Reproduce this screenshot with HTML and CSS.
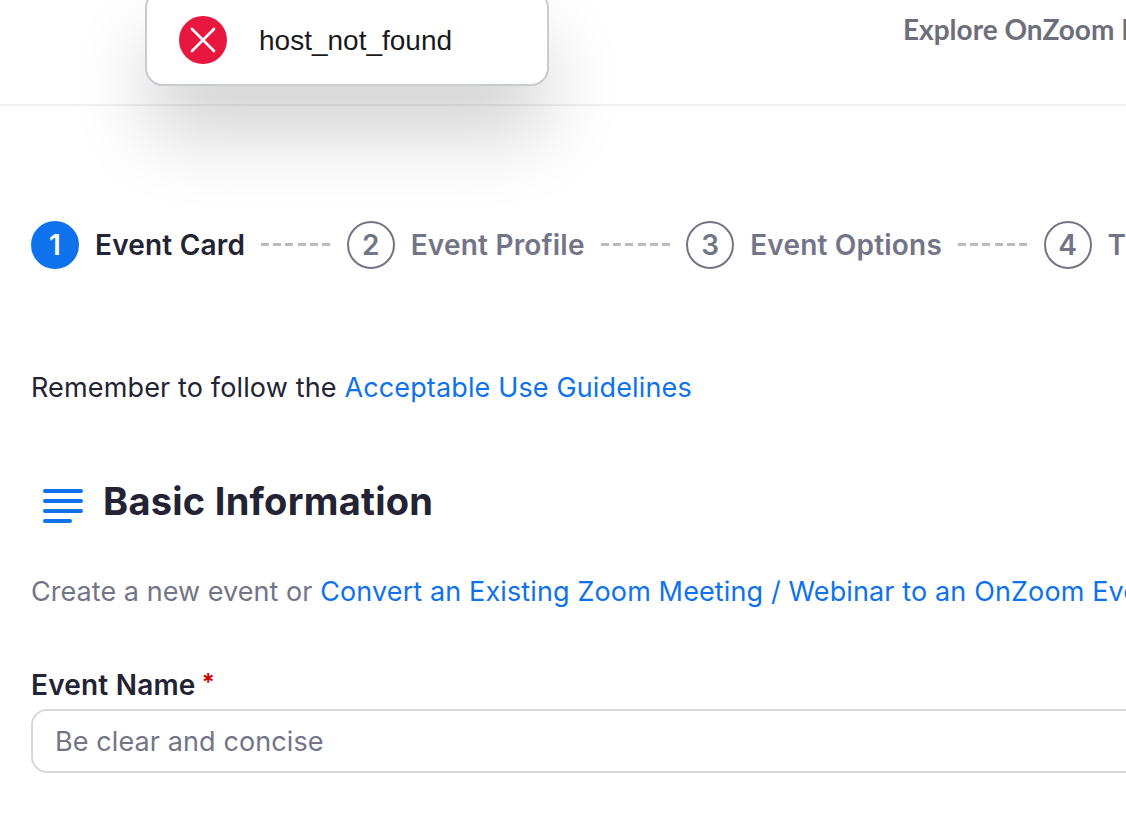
FILE: index.html
```html
<!DOCTYPE html>
<html lang="en">
<head>
<meta charset="utf-8">
<title>Event Card</title>
<link rel="stylesheet" href="styles.css">
</head>
<body>
<header class="topbar">
  <span class="explore">Explore OnZoom Events</span>
</header>
<div class="toast">
  <svg class="toast-icon" viewBox="0 0 48 48" width="48" height="48" aria-hidden="true">
    <circle cx="24" cy="24" r="24" fill="#e8173f"/>
    <path d="M13 13 L35 35 M35 13 L13 35" stroke="#fff" stroke-width="2.6" stroke-linecap="round" fill="none"/>
  </svg>
  <span class="toast-text">host_not_found</span>
</div>
<main class="content">
  <ol class="steps">
    <li class="step step-active"><span class="num">1</span><span class="label">Event Card</span></li>
    <li class="dash"></li>
    <li class="step"><span class="num">2</span><span class="label">Event Profile</span></li>
    <li class="dash"></li>
    <li class="step"><span class="num">3</span><span class="label">Event Options</span></li>
    <li class="dash"></li>
    <li class="step"><span class="num">4</span><span class="label">Tickets</span></li>
  </ol>
  <p class="guide">Remember to follow the <a href="#">Acceptable Use Guidelines</a></p>
  <div class="section-head">
    <svg class="list-icon" viewBox="0 0 40 34" width="40" height="34" aria-hidden="true">
      <path d="M2 2 H38 M2 12 H38 M2 22 H38 M2 32 H27" stroke="#0e72ed" stroke-width="4" stroke-linecap="round" fill="none"/>
    </svg>
    <h2>Basic Information</h2>
  </div>
  <p class="intro">Create a new event or <a href="#">Convert an Existing Zoom Meeting / Webinar to an OnZoom Event</a></p>
  <label class="field-label" for="name">Event Name <span class="req">*</span></label>
  <input class="field" id="name" type="text" placeholder="Be clear and concise">
</main>
</body>
</html>
```

FILE: styles.css
```css
* { box-sizing: border-box; }
html, body { margin: 0; height: 100%; overflow: hidden; }
body {
  background: #fff;
  font-family: Inter, "Noto Sans", sans-serif;
  color: #232333;
  width: 1126px;
  height: 816px;
}
.topbar {
  height: 106px;
  border-bottom: 2px solid #f0f0f2;
  display: flex;
  align-items: flex-start;
  padding: 12px 0 0 903px;
  white-space: nowrap;
  overflow: hidden;
}
.explore {
  font-family: Lato, sans-serif;
  font-weight: 700;
  font-size: 28px;
  line-height: 34px;
  color: #6e6e7b;
}
.toast {
  position: absolute;
  left: 145px;
  top: -10px;
  width: 404px;
  height: 96px;
  background: #fff;
  border: 2px solid #c9cbd3;
  border-radius: 18px;
  display: flex;
  align-items: center;
  padding: 4px 0 0 32px;
  box-shadow: 0 48px 80px -4px rgba(0,0,0,.2);
}
.toast-icon { flex: none; }
.toast-text {
  margin: 2px 0 0 32px;
  font-family: "Liberation Sans", Arial, sans-serif;
  font-size: 28px;
  color: #1a1a1a;
}
.content { padding: 115px 0 0 31px; white-space: nowrap; }
.steps {
  list-style: none;
  margin: 0;
  padding: 0;
  display: flex;
  align-items: center;
  height: 48px;
}
.step { display: flex; align-items: center; flex: none; gap: 16px; }
.num {
  width: 48px;
  height: 48px;
  border-radius: 50%;
  border: 2px solid #747487;
  color: #747487;
  font-weight: 600;
  font-size: 28px;
  display: flex;
  align-items: center;
  justify-content: center;
  flex: none;
}
.label { font-size: 28px; letter-spacing: .2px; font-weight: 600; color: #747487; line-height: 34px; }
.step-active .num { background: #0e72ed; border-color: #0e72ed; color: #fff; }
.step-active .label { color: #232333; }
.dash {
  width: 69.5px;
  flex: none;
  margin: 0 16px;
  height: 3px;
  background: repeating-linear-gradient(90deg, #bbbbbf 0 8px, transparent 8px 12.2px);
  position: relative;
  top: -1px;
}
.guide {
  margin: 102px 0 0;
  font-size: 27px;
  letter-spacing: .14px;
  line-height: 34px;
  color: #232333;
}
a { color: #0e72ed; text-decoration: none; }
.section-head { display: flex; align-items: center; margin: 68px 0 0 12px; height: 56px; }
.list-icon { flex: none; margin-top: 10px; }
h2 { margin: 0 0 0 20px; font-size: 38px; letter-spacing: .26px; font-weight: 700; line-height: 48px; color: #232333; }
.intro { margin: 46px 0 0; font-size: 27px; letter-spacing: .05px; line-height: 34px; color: #747487; }
.intro a { letter-spacing: .12px; }
.field-label { display: block; margin-top: 59px; font-size: 28px; letter-spacing: .2px; font-weight: 600; line-height: 34px; color: #232333; }
.req { color: #c00; font-size: 24px; margin-left: -1px; vertical-align: 4px; line-height: 1; }
.field {
  display: block;
  margin-top: 7px;
  width: 1200px;
  height: 64px;
  border: 2px solid #d8d8dc;
  border-radius: 16px;
  padding: 0 22px;
  font-family: inherit;
  font-size: 27px;
  letter-spacing: .1px;
  color: #232333;
  background: #fff;
  outline: none;
}
.field::placeholder { color: #747487; opacity: 1; }
```
